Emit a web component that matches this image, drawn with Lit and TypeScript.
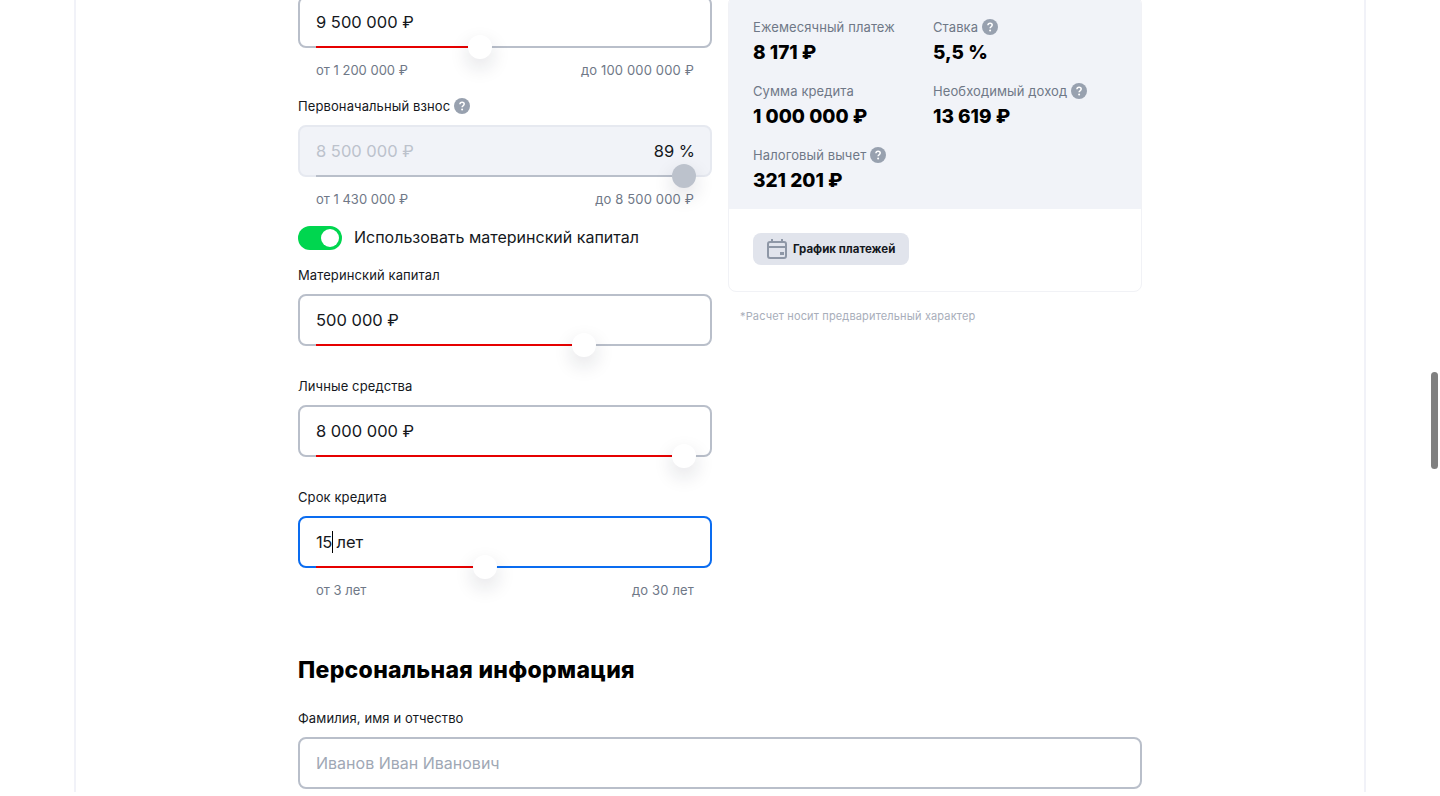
import { LitElement, css, html, nothing } from "lit";
import { customElement } from "lit/decorators.js";

interface Field {
  label: string;
  value: string;
  pos: number;
  help?: boolean;
  from?: string;
  to?: string;
  disabled?: boolean;
  percent?: string;
  focused?: boolean;
  gap: "small" | "field" | "none";
}

const help = html`<svg class="help" width="16" height="16" viewBox="0 0 16 16">
  <circle cx="8" cy="8" r="8" fill="#98a1af"></circle>
  <path d="M5.9 6.2c.1-1.2 1-1.9 2.2-1.9 1.2 0 2.1.7 2.1 1.8 0 .9-.5 1.3-1.2 1.7-.6.4-.9.7-.9 1.4" fill="none" stroke="#fff" stroke-width="1.5"></path>
  <circle cx="8.1" cy="11.6" r="1" fill="#fff"></circle>
</svg>`;

const calendar = html`<svg width="24" height="24" viewBox="0 0 24 24" fill="none" stroke="#8e97a6" stroke-width="2">
  <rect x="3" y="5" width="18" height="16" rx="2"></rect>
  <path d="M3 10h18M7 2v4M17 2v4"></path>
  <rect x="15" y="15" width="4" height="3" fill="#8e97a6" stroke="none"></rect>
</svg>`;

@customElement("app-root")
export class AppRoot extends LitElement {
  static styles = css`
    :host {
      display: block;
      height: 796px;
      overflow: hidden;
      position: relative;
      background: #fff;
      font-family: "Inter", "Noto Sans", sans-serif;
      color: #000;
    }

    .page {
      box-sizing: border-box;
      width: 1292px;
      height: 796px;
      margin-left: 74px;
      padding: 0 222px;
      border-left: 2px solid #f1f2f8;
      border-right: 2px solid #f1f2f8;
    }

    .columns {
      display: grid;
      grid-template-columns: 414px 414px;
      gap: 16px;
      margin-top: -4px;
    }

    .form {
      display: flex;
      flex-direction: column;
    }

    .label {
      display: flex;
      align-items: center;
      gap: 4px;
      height: 20px;
      margin-bottom: 9px;
      font-size: 13px;
      letter-spacing: 0.1px;
      color: #15181d;
    }

    .input {
      position: relative;
      box-sizing: border-box;
      display: flex;
      align-items: center;
      justify-content: space-between;
      height: 52px;
      padding: 0 16px;
      border: 2px solid #b9bfca;
      border-radius: 8px;
      font-size: 16.5px;
      color: #15181d;
      background: #fff;
    }

    .input.disabled {
      border-color: #e6e9f0;
      background: #f1f3f8;
      color: #bcc2cc;
    }

    .input.focused {
      border-color: #0a6cf0;
    }

    .input.placeholder {
      font-size: 16px;
      color: #a0a8b5;
    }

    .percent {
      margin-right: -1px;
      color: #15181d;
    }

    .num {
      letter-spacing: -0.5px;
    }

    .caret {
      display: inline-block;
      width: 1px;
      height: 22px;
      margin-right: -1px;
      vertical-align: -5px;
      background: #000;
    }

    .track {
      position: absolute;
      left: 16px;
      right: 16px;
      bottom: -2px;
      height: 2px;
    }

    .fill {
      height: 2px;
      background: #e60000;
    }

    .thumb {
      position: absolute;
      top: -11px;
      width: 24px;
      height: 24px;
      border-radius: 50%;
      background: #fff;
      box-shadow: 0 8px 20px rgba(20, 30, 50, 0.14);
    }

    .disabled .fill {
      background: #b9bfca;
    }

    .disabled .thumb {
      background: #bcc2cc;
    }

    .hints {
      display: flex;
      justify-content: space-between;
      height: 20px;
      margin-top: 12px;
      padding: 0 18px;
      font-size: 13px;
      line-height: 20px;
      color: #6f7887;
    }

    .hints span:last-child {
      letter-spacing: 0.15px;
    }

    .toggle-row {
      display: flex;
      align-items: center;
      gap: 12px;
      margin: 17px 0 15px;
      font-size: 16px;
      color: #15181d;
    }

    .toggle-text {
      margin-bottom: 2px;
    }

    .toggle {
      box-sizing: border-box;
      display: flex;
      justify-content: flex-end;
      width: 44px;
      height: 24px;
      padding: 3px;
      border-radius: 12px;
      background: #00d64f;
    }

    .knob {
      width: 18px;
      height: 18px;
      border-radius: 50%;
      background: #fff;
    }

    .gap-small {
      margin-bottom: 16px;
    }

    .gap-field {
      margin-bottom: 30px;
    }

    .card {
      box-sizing: border-box;
      height: 296px;
      border: 1px solid #f1f2f6;
      border-radius: 8px;
      overflow: hidden;
    }

    .stats {
      display: grid;
      grid-template-columns: 180px 180px;
      row-gap: 16px;
      padding: 20px 24px 16px;
      background: #f1f3f8;
    }

    .stat-label {
      display: flex;
      align-items: center;
      gap: 4px;
      height: 20px;
      font-size: 13px;
      letter-spacing: 0.1px;
      color: #6f7887;
    }

    .stat-value {
      height: 24px;
      margin-top: 4px;
      font-size: 19px;
      line-height: 24px;
      font-weight: 800;
    }

    .actions {
      padding: 24px;
    }

    .schedule {
      display: inline-flex;
      align-items: center;
      gap: 4px;
      box-sizing: border-box;
      height: 32px;
      width: 156px;
      padding: 0 12px;
      border-radius: 8px;
      background: #e1e4ec;
      font-size: 11.5px;
      font-weight: 700;
      color: #15181d;
    }

    .note {
      margin: 14px 0 0 12px;
      font-size: 11px;
      line-height: 20px;
      letter-spacing: 0.15px;
      color: #a8aeba;
    }

    h2 {
      margin: 54px 0 22px;
      font-size: 23px;
      line-height: 32px;
      font-weight: 800;
      letter-spacing: 0.3px;
    }

    .full {
      width: 844px;
    }

    .scrollbar {
      position: absolute;
      left: 1431px;
      top: 372px;
      width: 7px;
      height: 97px;
      border-radius: 4px;
      background: #808080;
    }
  `;

  fields: Field[] = [
    { label: "", value: "9 500 000 ₽", pos: 152, from: "от 1 200 000 ₽", to: "до 100 000 000 ₽", gap: "small" },
    { label: "Первоначальный взнос", help: true, value: "8 500 000 ₽", percent: "89 %", pos: 356, disabled: true, from: "от 1 430 000 ₽", to: "до 8 500 000 ₽", gap: "none" },
    { label: "Материнский капитал", value: "500 000 ₽", pos: 256, gap: "field" },
    { label: "Личные средства", value: "8 000 000 ₽", pos: 356, gap: "field" },
    { label: "Срок кредита", value: "15 лет", pos: 157, focused: true, from: "от 3 лет", to: "до 30 лет", gap: "none" },
  ];

  stats = [
    { label: "Ежемесячный платеж", value: "8 171 ₽" },
    { label: "Ставка", value: "5,5 %", help: true },
    { label: "Сумма кредита", value: "1 000 000 ₽" },
    { label: "Необходимый доход", value: "13 619 ₽", help: true },
    { label: "Налоговый вычет", value: "321 201 ₽", help: true },
  ];

  renderField(f: Field) {
    const cls = `input ${f.disabled ? "disabled" : ""} ${f.focused ? "focused" : ""}`;
    return html`
      <div class="gap-${f.gap}">
        ${f.label ? html`<div class="label">${f.label}${f.help ? help : nothing}</div>` : nothing}
        <div class=${cls}>
          ${f.focused
            ? html`<span><span class="num">15</span><i class="caret"></i> лет</span>`
            : html`<span>${f.value}</span>`}
          ${f.percent ? html`<span class="percent">${f.percent}</span>` : nothing}
          <div class="track">
            <div class="fill" style="width: ${f.pos}px"></div>
            <div class="thumb" style="left: ${f.pos}px"></div>
          </div>
        </div>
        ${f.from ? html`<div class="hints"><span>${f.from}</span><span>${f.to}</span></div>` : nothing}
      </div>
    `;
  }

  render() {
    return html`
      <div class="page">
        <div class="columns">
          <div class="form">
            ${this.renderField(this.fields[0])}
            ${this.renderField(this.fields[1])}
            <div class="toggle-row">
              <div class="toggle"><div class="knob"></div></div>
              <span class="toggle-text">Использовать материнский капитал</span>
            </div>
            ${this.fields.slice(2).map((f) => this.renderField(f))}
          </div>
          <div>
            <div class="card">
              <div class="stats">
                ${this.stats.map(
                  (s) => html`
                    <div>
                      <div class="stat-label">${s.label}${s.help ? help : nothing}</div>
                      <div class="stat-value">${s.value}</div>
                    </div>
                  `
                )}
              </div>
              <div class="actions">
                <div class="schedule">${calendar} График платежей</div>
              </div>
            </div>
            <div class="note">*Расчет носит предварительный характер</div>
          </div>
        </div>
        <h2>Персональная информация</h2>
        <div class="full">
          <div class="label">Фамилия, имя и отчество</div>
          <div class="input placeholder">Иванов Иван Иванович</div>
        </div>
      </div>
      <div class="scrollbar"></div>
    `;
  }
}
